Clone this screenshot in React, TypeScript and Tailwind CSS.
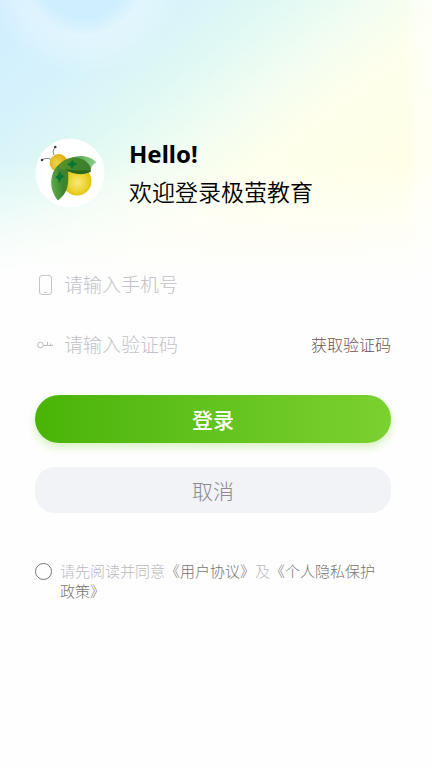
import { useState } from 'react';

function FireflyLogo() {
  return (
    <svg viewBox="0 0 70 70" className="size-[70px] shrink-0" role="img" aria-label="极萤教育">
      <defs>
        <radialGradient id="body" cx="0.52" cy="0.55" r="0.55">
          <stop offset="0" stopColor="#f8e87c" />
          <stop offset="0.6" stopColor="#ecd22c" />
          <stop offset="1" stopColor="#dcb800" />
        </radialGradient>
        <radialGradient id="head" cx="0.4" cy="0.5" r="0.6">
          <stop offset="0" stopColor="#f2d84a" />
          <stop offset="1" stopColor="#d9a908" />
        </radialGradient>
        <linearGradient id="wingTop" x1="0" y1="0.4" x2="1" y2="0.5">
          <stop offset="0" stopColor="#5f962c" />
          <stop offset="0.5" stopColor="#3f862a" />
          <stop offset="1" stopColor="#3c7c2c" />
        </linearGradient>
        <linearGradient id="wingSide" x1="0" y1="0.7" x2="1" y2="0.5">
          <stop offset="0" stopColor="#5fae4c" />
          <stop offset="0.5" stopColor="#3d8230" />
          <stop offset="1" stopColor="#4a8522" />
        </linearGradient>
        <linearGradient id="wingBack" x1="0" y1="0" x2="1" y2="0">
          <stop offset="0" stopColor="#4a9a42" />
          <stop offset="1" stopColor="#8fd08f" />
        </linearGradient>
      </defs>
      <circle cx="35" cy="35" r="34.500" fill="#fff" />
      <g fill="none" stroke="#4b4b4b" strokeWidth="0.7">
        <path d="M7 22C10 20 13 20 16.500 21.500" />
        <path d="M19 17C17.500 14 18 12 20 9.500" />
      </g>
      <circle cx="7" cy="22" r="1.200" fill="#333" />
      <circle cx="20.300" cy="9" r="1.200" fill="#333" />
      <circle cx="23.700" cy="25" r="9" fill="url(#head)" />
      <circle cx="42" cy="43" r="14.500" fill="url(#body)" />
      <path d="M36 20C45 16 56 18 61.500 24.500C57 26 57 30 53 34Z" fill="url(#wingBack)" />
      <path d="M30 23C16 28 11 48 23 62.500C33 55 34 46 33 34L40 30Z" fill="url(#wingSide)" />
      <path d="M24 27C31 18 42 18 49 22C55 26 57 31 55.500 34C47 37 38 36 31 32C27 32 23 31 24 27Z" fill="url(#wingTop)" />
      <path d="M30 31C38 33 47 32 56 33C49 38 38 37 30 31Z" fill="#24601a" opacity="0.8" />
      <path d="M37.500 21.500L39 24.500L43 25.500L39.500 27.500L37 31L35.500 28L32 26.500L35.500 24.500Z" fill="#087532" />
      <path d="M24.500 33L26 36.500L29.500 38L26.500 40.500L24 45L23 41L20 39.500L23 37Z" fill="#087532" />
    </svg>
  );
}

function PhoneIcon() {
  return (
    <svg viewBox="0 0 18 22" className="h-[22px] w-[18px] shrink-0" fill="none" stroke="#c4c4ca" aria-hidden="true">
      <rect x="4.500" y="1.500" width="12" height="19" rx="2.500" />
      <path d="M9 18.500h3" />
    </svg>
  );
}

function KeyIcon() {
  return (
    <svg viewBox="0 0 18 22" className="h-[22px] w-[18px] shrink-0" fill="none" stroke="#bdbdc3" aria-hidden="true">
      <circle cx="5.500" cy="11" r="2.800" />
      <path d="M8.500 11.500H18M12.500 11.500V8M15.500 11.500V9.500" />
    </svg>
  );
}

export default function App() {
  const [phone, setPhone] = useState('');
  const [code, setCode] = useState('');
  const [agreed, setAgreed] = useState(false);

  return (
    <main className="min-h-screen bg-[#fefefe] bg-[linear-gradient(180deg,transparent_160px,#fefefe_280px),linear-gradient(90deg,transparent_94%,#ffffff80_97%),radial-gradient(circle_at_84px_-25px,#cdeeffb0_44px,#ffffff48_60px,#ffffff40_72px,transparent_100px),linear-gradient(142deg,#d0edff_0px,#d5f2fc_90px,#dff8f4_165px,#f2fdf2_230px,#feffec_290px,#ffffe7_380px,#fffff0_500px)] bg-[length:100%_280px] bg-no-repeat pt-[138px] pr-[41px] pb-10 pl-[35px] font-['Noto_Sans','Noto_Sans_CJK_SC',sans-serif]">
      <header className="flex items-center gap-6">
        <FireflyLogo />
        <div className="text-black">
          <p className="text-2xl leading-8 font-bold">Hello!</p>
          <h1 className="mt-1.5 text-[23px] leading-8 font-[350]">欢迎登录极萤教育</h1>
        </div>
      </header>

      <form className="mt-[57px]" onSubmit={(e) => e.preventDefault()}>
        <label className="flex h-10 items-center gap-[11px]">
          <PhoneIcon />
          <input
            type="tel"
            aria-label="手机号"
            placeholder="请输入手机号"
            value={phone}
            onChange={(e) => setPhone(e.target.value)}
            className="min-w-0 flex-1 bg-transparent text-[19px] font-light text-gray-700 outline-none placeholder:text-[#c2c2c8]"
          />
        </label>

        <div className="mt-5 flex h-10 items-center justify-between">
          <label className="flex min-w-0 flex-1 items-center gap-[11px]">
            <KeyIcon />
            <input
              type="text"
              aria-label="验证码"
              placeholder="请输入验证码"
              value={code}
              onChange={(e) => setCode(e.target.value)}
              className="min-w-0 flex-1 bg-transparent text-[19px] font-light text-gray-700 outline-none placeholder:text-[#c2c2c8]"
            />
          </label>
          <button type="button" className="shrink-0 pl-2 text-[16px] font-light text-[#6f5354]">
            获取验证码
          </button>
        </div>

        <button
          type="submit"
          className="mt-[30px] block h-12 w-full rounded-full bg-linear-to-r from-[#49b405] to-[#7bd12f] pt-1 text-[21px] font-medium text-white shadow-[0_4px_8px_#7bd12f50]"
        >
          登录
        </button>
        <button
          type="button"
          className="mt-6 block h-[46px] w-full rounded-[20px] bg-[#f1f3f6] pt-1 text-[21px] font-light text-[#8d8990]"
        >
          取消
        </button>

        <div className="mt-12 flex items-start gap-2 pr-2">
          <input
            id="agree"
            type="checkbox"
            checked={agreed}
            onChange={(e) => setAgreed(e.target.checked)}
            className="mt-0.5 size-[17px] shrink-0 appearance-none rounded-full border border-[#77737a] checked:bg-[#49b405]"
          />
          <p className="text-[15px] leading-5 font-light text-[#b9b9bf]">
            <label htmlFor="agree">请先阅读并同意</label>
            <a href="#agreement" className="text-[#77736f]">《用户协议》</a>
            及
            <a href="#privacy" className="text-[#77736f]">《个人隐私保护政策》</a>
          </p>
        </div>
      </form>
    </main>
  );
}
